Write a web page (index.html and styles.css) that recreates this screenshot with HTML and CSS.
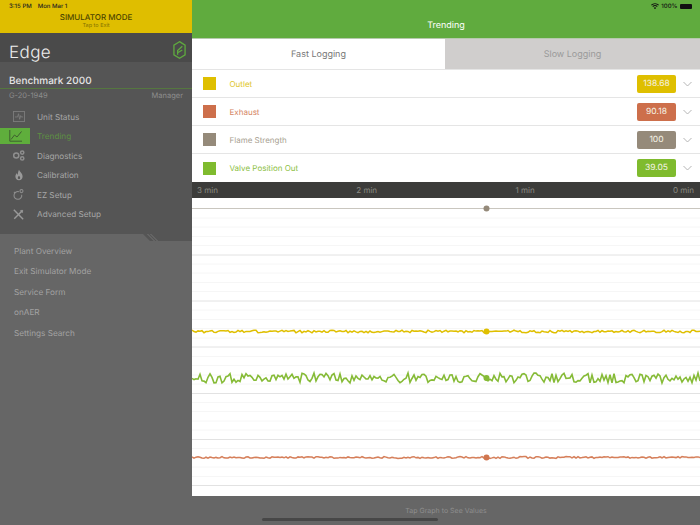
FILE: index.html
```html
<!DOCTYPE html>
<html lang="en">
<head>
<meta charset="utf-8">
<title>Trending</title>
<link rel="stylesheet" href="styles.css">
</head>
<body>
<div class="app">
  <aside class="sidebar">
    <div class="sim">
      <div class="status-left"><span>3:15 PM</span><span>Mon Mar 1</span></div>
      <div class="sim-title">SIMULATOR MODE</div>
      <div class="sim-sub">Tap to Exit</div>
    </div>
    <div class="brand">
      <span class="brand-name">Edge</span>
      <svg class="brand-logo" width="13" height="20" viewBox="0 0 14 20" fill="none" stroke="#5fa93f" stroke-width="1.4">
        <path d="M7 1 13 4.7V15.3L7 19 1 15.3V4.7Z"/>
        <path d="M5 15 5 10.5 10 6M5 13 10 10"/>
      </svg>
    </div>
    <div class="device">
      <div class="device-name">Benchmark 2000</div>
      <div class="device-meta"><span>G-20-1949</span><span>Manager</span></div>
    </div>
    <nav class="nav">
      <a class="nav-item"><span class="nav-icon"><svg width="12" height="11" viewBox="0 0 13 12" fill="none" stroke="#7c7c7c"><rect x=".5" y=".5" width="12" height="11"/><path d="M2 6.500H5L6 3 7.200 9 8.300 5 9 6.500H11"/></svg></span><span>Unit Status</span></a>
      <a class="nav-item active"><span class="nav-icon"><svg width="13" height="12" viewBox="0 0 13 12" fill="none" stroke="#3f5f30"><path d="M.8 0V11.200H13"/><path d="M2 9.500 5.500 5 8 7 12.500 1.500"/></svg></span><span>Trending</span></a>
      <a class="nav-item"><span class="nav-icon"><svg width="14" height="11" viewBox="0 0 15 12" fill="none" stroke="#8f8f8f" stroke-width="1.6"><circle cx="4.500" cy="6" r="2.800"/><circle cx="11" cy="2.800" r="1.800"/><circle cx="11" cy="9.200" r="1.800"/></svg></span><span>Diagnostics</span></a>
      <a class="nav-item"><span class="nav-icon"><svg width="8" height="12" viewBox="0 0 10 13" fill="#9a9a9a"><path d="M5 0C6 2.500 9.500 4.500 9.500 8.300 9.500 11 7.500 13 5 13S.5 11 .5 8.300C.5 6.500 1.500 5 2.500 4 2.500 5.500 3 6 3.600 6.300 3.500 4 4 2 5 0ZM5 7.500C4.200 8.500 3.500 9.300 3.500 10.300 3.500 11.200 4.200 11.800 5 11.800S6.500 11.200 6.500 10.300C6.500 9.300 5.800 8.500 5 7.500Z" fill-rule="evenodd"/></svg></span><span>Calibration</span></a>
      <a class="nav-item"><span class="nav-icon"><svg width="11" height="11" viewBox="0 0 13 13" fill="none" stroke="#8f8f8f" stroke-width="1.200"><path d="M7 3.200A4.600 4.600 0 1 0 10.300 6.800"/><path d="M1 3.500 2.500 4.500"/><circle cx="10" cy="2.500" r="1.800"/></svg></span><span>EZ Setup</span></a>
      <a class="nav-item"><span class="nav-icon"><svg width="11" height="11" viewBox="0 0 13 13" fill="none" stroke="#999" stroke-width="1.700"><path d="M1 1 12 12"/><path d="M11.500 1.500 1.500 11.500"/><path d="M9 1.500 11.500 4"/></svg></span><span>Advanced Setup</span></a>
    </nav>
    <div class="lower-wrap">
      <svg class="notch" width="16" height="8" viewBox="0 0 16 8" fill="none" stroke="#747474" stroke-width="1"><path d="M4.500 0 11.500 7M7.500 0 14.500 7"/></svg>
      <div class="lower">
        <a class="lower-item">Plant Overview</a>
        <a class="lower-item">Exit Simulator Mode</a>
        <a class="lower-item">Service Form</a>
        <a class="lower-item">onAER</a>
        <a class="lower-item">Settings Search</a>
      </div>
    </div>
  </aside>
  <main class="main">
    <header class="topbar">
      <div class="status-right">
        <svg width="8" height="6.500" viewBox="0 0 10 8" fill="#111"><path d="M5 7.800 3.500 6A2.200 2.200 0 0 1 6.500 6ZM2.600 5 1.700 4A4.800 4.800 0 0 1 8.300 4L7.400 5A3.400 3.400 0 0 0 2.600 5ZM1 3.200 0 2.200A7.200 7.200 0 0 1 10 2.200L9 3.200A5.800 5.800 0 0 0 1 3.200Z"/></svg>
        <span>100%</span>
        <span class="battery"></span>
      </div>
      <h1 class="title">Trending</h1>
    </header>
    <div class="tabs">
      <div class="tab tab-on">Fast Logging</div>
      <div class="tab tab-off">Slow Logging</div>
    </div>
    <ul class="rows">
      <li class="row c-yellow"><span class="swatch"></span><span class="label">Outlet</span><span class="badge">138.68</span><svg class="chev" width="9" height="6" viewBox="0 0 9 6" fill="none" stroke="#b5b5b5"><path d="M.5 1 4.500 5 8.500 1"/></svg></li>
      <li class="row c-orange"><span class="swatch"></span><span class="label">Exhaust</span><span class="badge">90.18</span><svg class="chev" width="9" height="6" viewBox="0 0 9 6" fill="none" stroke="#b5b5b5"><path d="M.5 1 4.500 5 8.500 1"/></svg></li>
      <li class="row c-taupe"><span class="swatch"></span><span class="label">Flame Strength</span><span class="badge">100</span><svg class="chev" width="9" height="6" viewBox="0 0 9 6" fill="none" stroke="#b5b5b5"><path d="M.5 1 4.500 5 8.500 1"/></svg></li>
      <li class="row c-green"><span class="swatch"></span><span class="label">Valve Position Out</span><span class="badge">39.05</span><svg class="chev" width="9" height="6" viewBox="0 0 9 6" fill="none" stroke="#b5b5b5"><path d="M.5 1 4.500 5 8.500 1"/></svg></li>
    </ul>
    <div class="axis"><span>3 min</span><span>2 min</span><span>1 min</span><span>0 min</span></div>
    <svg id="chart" class="chart" width="508" height="298" viewBox="0 0 508 298"></svg>
    <footer class="hint">Tap Graph to See Values</footer>
  </main>
  <div class="home"></div>
</div>
<script src="chart.js"></script>
</body>
</html>
```
FILE: styles.css
```css
* { box-sizing: border-box; }
html, body { margin: 0; padding: 0; }
body { width: 700px; height: 525px; overflow: hidden; background: #666; font-family: Inter, "Liberation Sans", sans-serif; text-rendering: geometricPrecision; }
a { display: block; }
.app { position: relative; display: flex; width: 700px; height: 525px; }

.sidebar { width: 192px; height: 525px; display: flex; flex-direction: column; background: #555; flex: none; }
.sim { height: 33px; background: #dfbe00; color: #4a4200; padding-top: 3px; text-align: center; }
.status-left { display: flex; gap: 6px; padding-left: 9px; font-size: 6px; line-height: 7px; font-weight: 500; color: #222; }
.sim-title { font-size: 8px; line-height: 10px; margin-top: 2px; font-weight: 500; color: #4d4500; }
.sim-sub { font-size: 5.500px; line-height: 7px; margin-top: 1px; color: #857200; }

.brand { height: 29px; background: #4a4a4a; display: flex; align-items: center; justify-content: space-between; padding: 11px 6px 0 9px; }
.brand-name { font-size: 17px; font-weight: 300; color: #eee; letter-spacing: .4px; }
.brand-logo { margin-top: -7px; }
.device { height: 44px; padding: 13px 9px 0; }
.device-name { font-size: 10px; line-height: 13px; font-weight: 500; color: #e6e6e6; margin: 0; }
.device-meta { display: flex; justify-content: space-between; margin: 0 -9px; padding: 2px 9px 0; border-top: 1px solid #55773f; font-size: 7.500px; line-height: 10px; color: #8d8d8d; }

.nav { height: 128px; padding-top: 1px; }
.nav-item { display: flex; align-items: center; height: 19.500px; font-size: 8.200px; color: #a6a6a6; }
.nav-icon { width: 37px; height: 16px; display: flex; align-items: center; justify-content: center; flex: none; }
.active { color: #5d8f43; }
.active .nav-icon { background: #5fae3c; width: 30px; margin-right: 7px; }

.lower-wrap { position: relative; flex: 1; display: flex; }
.lower { flex: 1; background: #666; padding-top: 7px; clip-path: polygon(0 0, 143px 0, 150px 7px, 100% 7px, 100% 100%, 0 100%); }
.notch { position: absolute; top: 0; left: 143px; }
.lower-item { height: 20.400px; padding-left: 14px; font-size: 8.200px; line-height: 21px; color: #a2a2a2; }

.main { flex: 1; min-width: 0; display: flex; flex-direction: column; background: #fff; }
.topbar { height: 39px; background: #60ab3e; border-bottom: 1px solid #b7c9ae; display: flex; flex-direction: column; align-items: center; }
.status-right { align-self: flex-end; display: flex; align-items: center; gap: 2.500px; height: 12px; padding-right: 8px; font-size: 6px; font-weight: 500; color: #111; }
.battery { width: 12px; height: 5px; background: #111; border-radius: 1px; }
.title { margin: 8px 0 0; font-size: 9px; line-height: 12px; font-weight: 400; color: #fff; }

.tabs { display: flex; height: 30px; }
.tab { display: flex; align-items: center; justify-content: center; font-size: 9px; }
.tab-on { width: 253px; background: #fff; color: #777; }
.tab-off { flex: 1; background: #d0cecd; color: #9a9a9a; }

.rows { list-style: none; margin: 0; padding: 0; border-top: 1px solid #e5e5e5; }
.row { display: flex; align-items: center; height: 28px; border-bottom: 1px solid #e5e5e5; padding-left: 11px; }
.row:last-child { border-bottom: 0; }
.swatch { width: 13px; height: 13px; margin-right: 13.500px; }
.label { flex: 1; font-size: 8px; }
.badge { width: 39px; height: 18px; border-radius: 2px; color: #f6f3e6; font-size: 8.500px; line-height: 18px; text-align: center; margin-right: 7px; }
.chev { margin-right: 8px; }
.c-yellow .swatch, .c-yellow .badge { background: #dfbf00; }
.c-yellow .label { color: #e0c528; }
.c-orange .swatch, .c-orange .badge { background: #cd6f4b; }
.c-orange .label { color: #d58563; }
.c-taupe .swatch, .c-taupe .badge { background: #958a7a; }
.c-taupe .label { color: #a89f92; }
.c-green .swatch, .c-green .badge { background: #7fbb2e; }
.c-green .label { color: #8cc044; }

.axis { height: 16px; background: #3c3c3a; display: flex; justify-content: space-between; align-items: center; padding: 0 6px 0 5px; font-size: 8px; color: #8c8c84; flex: none; }
.chart { display: block; flex: none; background: #fff; }
.hint { flex: 1; background: #666; color: #8e8e8e; font-size: 7px; text-align: center; padding-top: 10px; }
.home { position: absolute; left: 262px; top: 518px; width: 176px; height: 3px; border-radius: 2px; background: #474747; }
```
FILE: chart.js
```js
(function () {
  var svg = document.getElementById('chart');
  var NS = 'http://www.w3.org/2000/svg';
  var seed = 42;
  function rnd() {
    seed = (seed * 16807) % 2147483647;
    return seed / 2147483647 - 0.5;
  }
  function add(tag, attrs) {
    var el = document.createElementNS(NS, tag);
    for (var k in attrs) el.setAttribute(k, attrs[k]);
    svg.appendChild(el);
  }
  var top = 10.6, step = 46.17;
  for (var i = 0; i <= 30; i++) {
    var y = Math.round((top + i * step / 5) * 2) / 2;
    var major = i % 5 === 0;
    add('line', {
      x1: 0, x2: 508, y1: y, y2: y,
      stroke: i === 0 ? '#c9c6bf' : major ? '#e2e2e2' : '#f6f6f6',
      'stroke-width': i === 0 ? 1.2 : 1
    });
  }
  var series = [
    { y: 133.5, amp: 2.6, dx: 2, color: '#dfbf00', w: 1.5 },
    { y: 180, amp: 10, dx: 2, color: '#86bb37', w: 1.6 },
    { y: 259.5, amp: 1.8, dx: 2, color: '#d67f5a', w: 1.5 }
  ];
  series.forEach(function (s) {
    var pts = [];
    for (var x = 0; x <= 508; x += s.dx) {
      pts.push(x + ',' + (s.y + rnd() * s.amp).toFixed(1));
    }
    add('polyline', { points: pts.join(' '), fill: 'none', stroke: s.color, 'stroke-width': s.w });
  });
  [[10.6, '#958a7a'], [133.5, '#dfbf00'], [180, '#86bb37'], [259.5, '#d0764f']].forEach(function (d) {
    add('circle', { cx: 294.5, cy: d[0], r: 3, fill: d[1] });
  });
})();
```
